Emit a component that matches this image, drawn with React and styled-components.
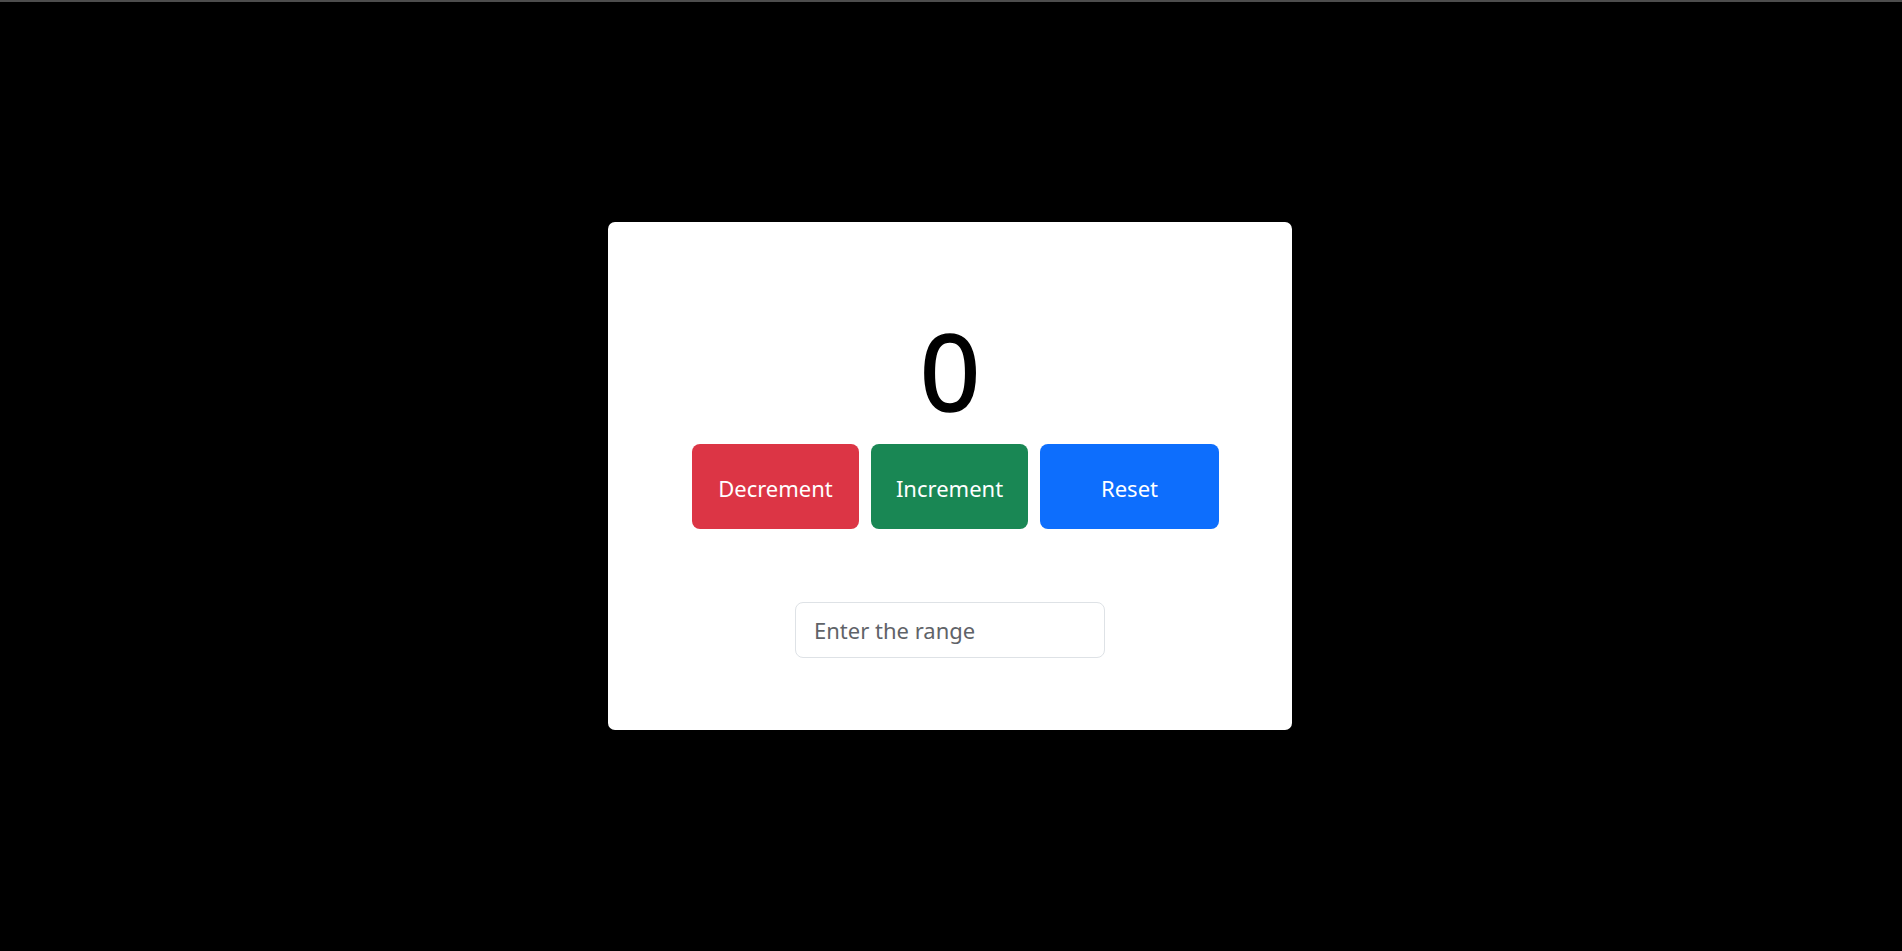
import React, { useState } from "react";
import styled, { createGlobalStyle } from "styled-components";

const GlobalStyle = createGlobalStyle`
  * {
    box-sizing: border-box;
  }
  html, body {
    margin: 0;
    padding: 0;
    background: #000;
  }
  body {
    font-family: "Noto Sans", "Open Sans", sans-serif;
  }
`;

export default function App() {
  const [count, setCount] = useState(0);
  const [range, setRange] = useState("");

  const step = Number(range) || 1;

  return (
    <>
      <GlobalStyle />
      <Page>
        <TopEdge />
        <Stage>
          <Card>
            <Count>{count}</Count>
            <ButtonRow>
              <ActionButton $bg="#dc3545" $width={167} onClick={() => setCount(count - step)}>
                Decrement
              </ActionButton>
              <ActionButton $bg="#198754" $width={157} onClick={() => setCount(count + step)}>
                Increment
              </ActionButton>
              <ActionButton $bg="#0d6efd" $width={179} onClick={() => setCount(0)}>
                Reset
              </ActionButton>
            </ButtonRow>
            <RangeInput
              type="text"
              placeholder="Enter the range"
              value={range}
              onChange={(e) => setRange(e.target.value)}
            />
          </Card>
        </Stage>
      </Page>
    </>
  );
}

const Page = styled.div`
  height: 100vh;
  display: flex;
  flex-direction: column;
  background: #000;
`;

const TopEdge = styled.div`
  height: 2px;
  background: #4d4d4d;
  flex-shrink: 0;
`;

const Stage = styled.div`
  flex: 1;
  display: flex;
  align-items: center;
  justify-content: center;
  padding-right: 2px;
  padding-bottom: 1px;
`;

const Card = styled.div`
  width: 684px;
  height: 508px;
  background: #fff;
  border-radius: 7px;
  padding-top: 95px;
  display: flex;
  flex-direction: column;
  align-items: center;
`;

const Count = styled.div`
  font-size: 106px;
  line-height: 1;
  height: 106px;
  color: #000;
  -webkit-text-stroke: 1.6px #000;
`;

const ButtonRow = styled.div`
  display: flex;
  gap: 12px;
  margin-top: 21px;
  margin-left: 11px;
`;

const ActionButton = styled.button`
  width: ${(p) => p.$width}px;
  height: 85px;
  border: none;
  border-radius: 8px;
  background: ${(p) => p.$bg};
  color: #fff;
  font-family: inherit;
  font-size: 22px;
  cursor: pointer;
  padding: 3px 0 0;
`;

const RangeInput = styled.input`
  margin-top: 73px;
  width: 310px;
  height: 56px;
  border: 1px solid #dee2e6;
  border-radius: 8px;
  padding: 0 18px;
  font-family: inherit;
  font-size: 22px;
  color: #212529;
  outline: none;
  background: #fff;

  &::placeholder {
    color: #5f6368;
  }
`;
